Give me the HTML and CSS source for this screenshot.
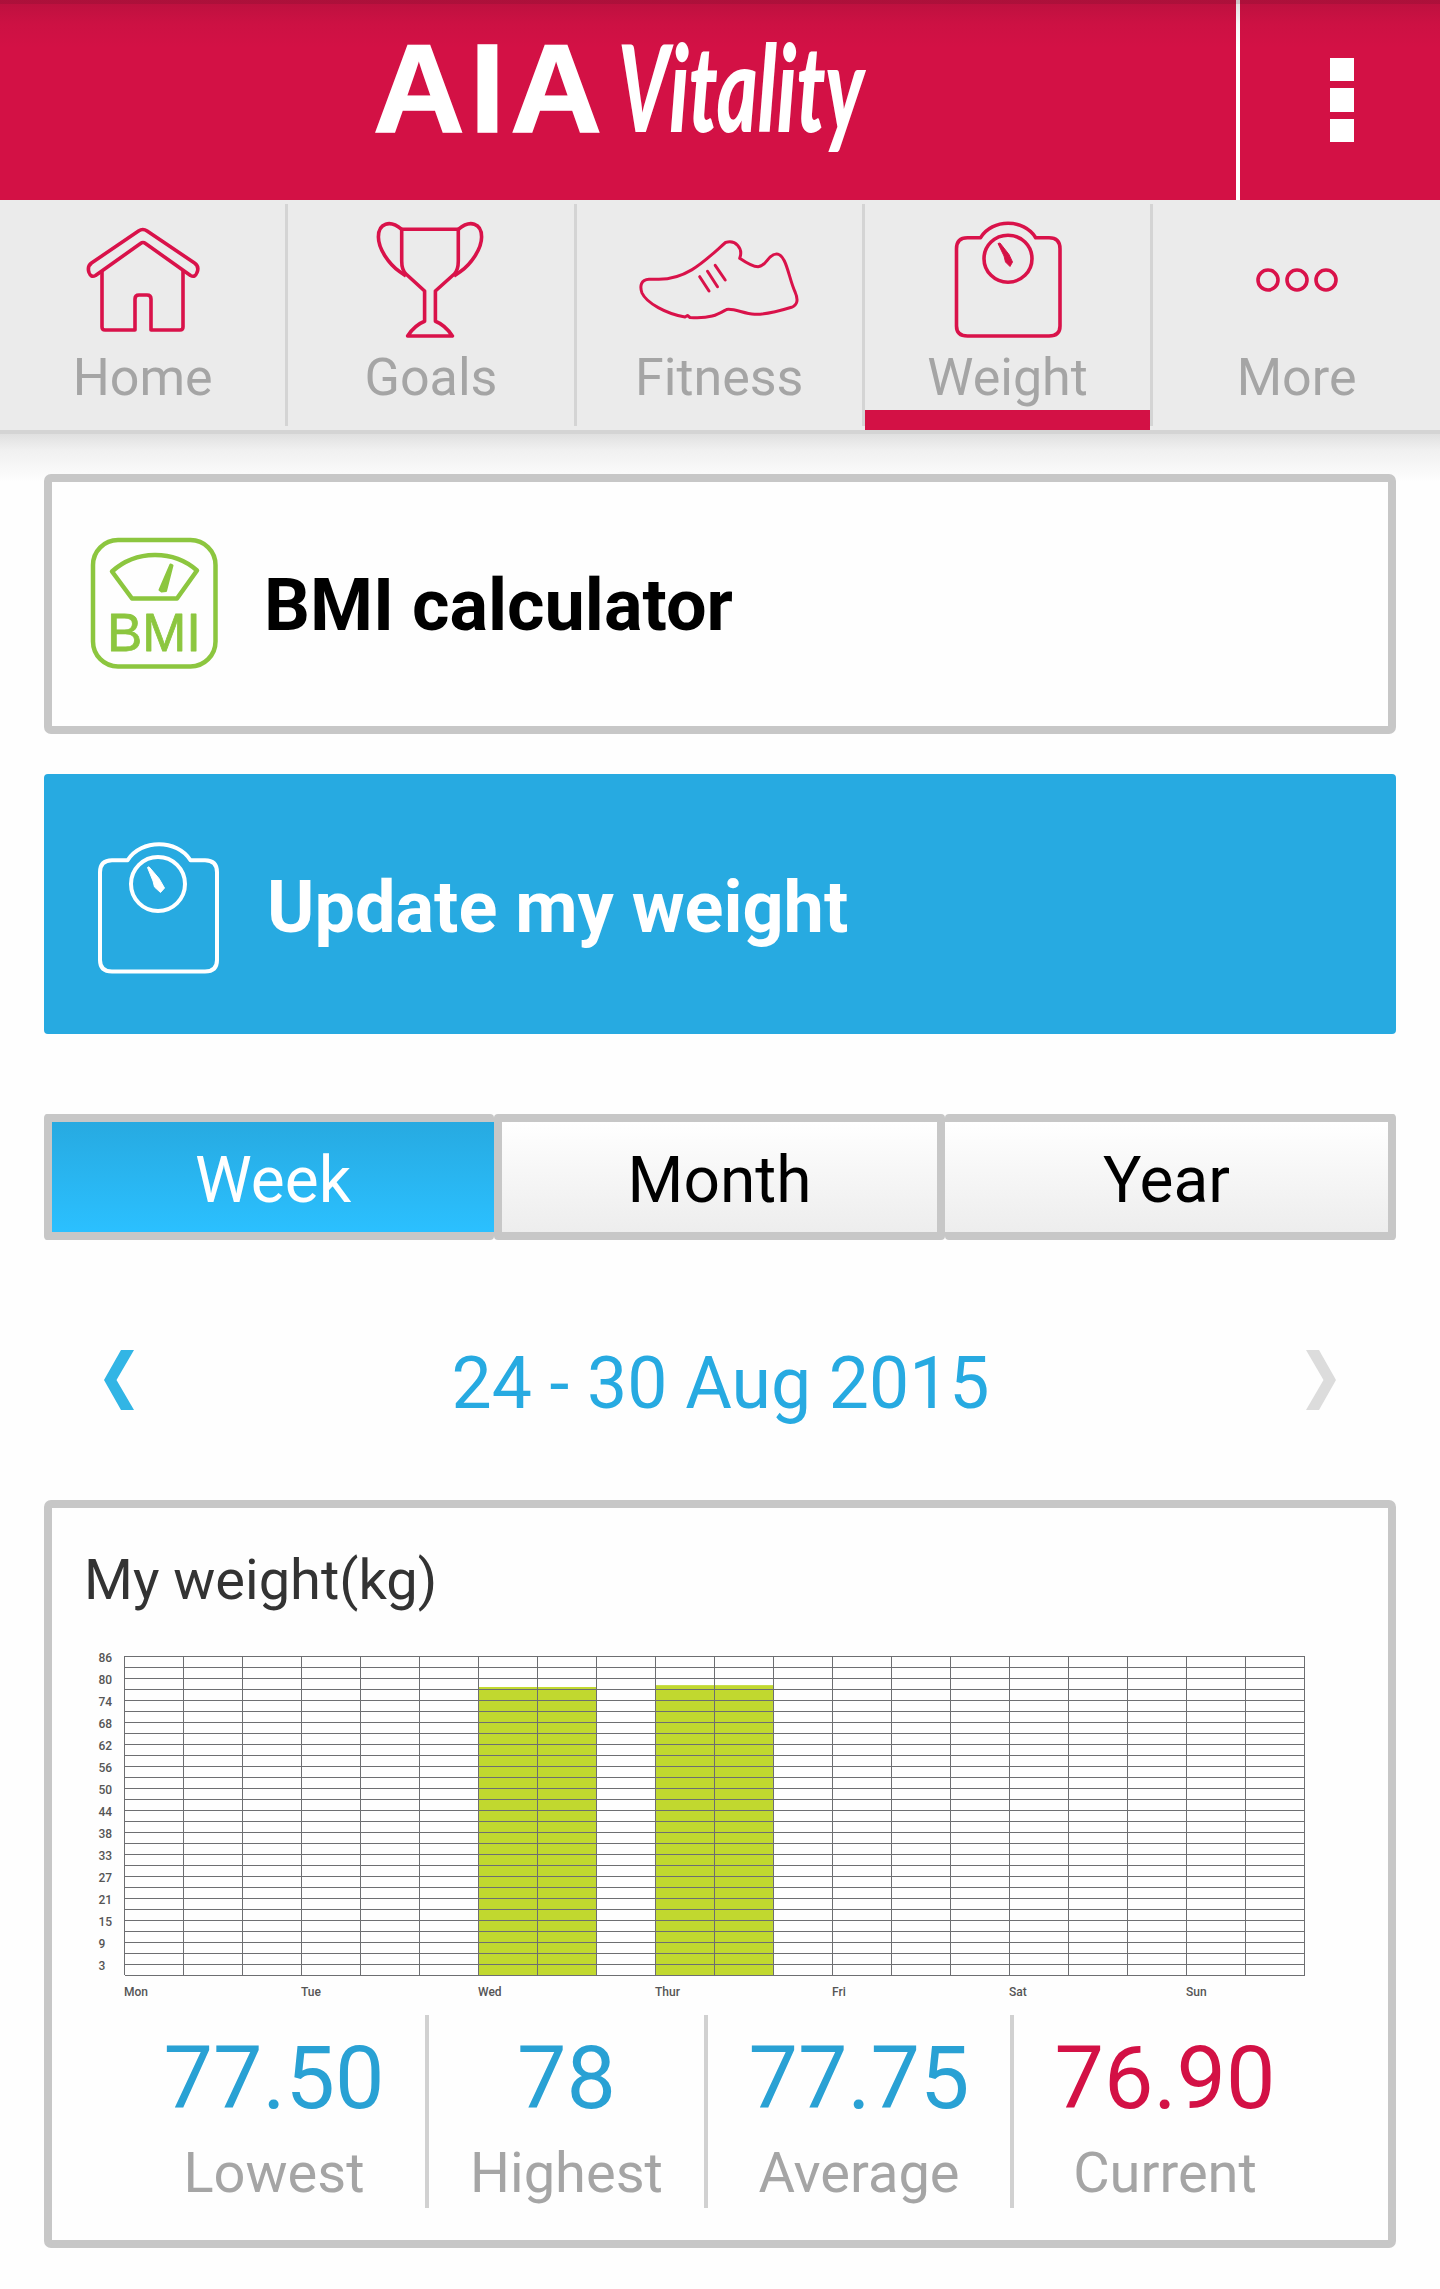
FILE: index.html
```html
<!DOCTYPE html>
<html lang="en">
<head>
  <meta charset="UTF-8">
  <meta name="viewport" content="width=device-width, initial-scale=1.0">
  <title>AIA Vitality - Weight</title>
  <link rel="stylesheet" href="styles.css">
</head>
<body>
  <header class="header">
    <div class="brand">
      <svg class="logo" viewBox="360 0 520 200" width="520" height="200">
        <text class="logo-aia" x="373" y="132" textLength="229">AIA</text>
        <text class="logo-vitality" x="618" y="132" textLength="246" lengthAdjust="spacingAndGlyphs">Vitality</text>
      </svg>
    </div>
    <div class="menu">
      <span></span>
      <span></span>
      <span></span>
    </div>
  </header>

  <nav class="nav">
    <a class="nav-item">
      <svg class="nav-icon" viewBox="52.5 220 180 120">
        <path d="M138 231q4.300 -3 8.600 0L194 263q5 3.500 2.500 9.500q-2 5.500 -6.500 3L145 243.500q-2.500 -2 -5 0L95 275.500q-4.500 2.500 -6.500 -3Q86.500 266.500 91 263z"/>
        <path d="M101.500 270v57q0 3 3 3h30V299q0 -4 4 -4h8q4 0 4 4v31h29q3 0 3 -3V270"/>
      </svg>
      <span>Home</span>
    </a>
    <a class="nav-item">
      <svg class="nav-icon" viewBox="341 220 180 120">
        <path d="M401.700 229.300h56.600V261q0 9 -4 13L435.400 291v30.300Q445 325 452.400 336H407.600Q415 325 424.600 321.300V291L406 274q-4.300 -4 -4.300 -13z"/>
        <path d="M401.700 229.300C390 219.500 378.400 223 378.400 237C378.400 249 389 264 399.500 271.500L406 276M458.300 229.300C470 219.500 481.600 223 481.600 237C481.600 249 471 264 460.500 271.500L454 276"/>
      </svg>
      <span>Goals</span>
    </a>
    <a class="nav-item">
      <svg class="nav-icon shoe" viewBox="629.500 220 180 120">
        <path d="M726 242.500C736 239.500 744 248 740.200 258.300C747 263 753 266.700 758.600 266.700C768 266 768 254 777 254C787 254 789 278 795.600 292C799 300 798 305 792 307.300C780 311 767 315 755 314.300C744 313.500 734 308 727 309.500C719 314 712 319 690.500 317.500L688 315.500L685.500 317C667 314 647 303 642.500 293C640 286 641.500 279.500 649.500 279.300H659C688 279.500 706 260 726 242.500z"/>
        <path d="M700.200 276.700L709.500 291M708 271.300L718 286.700M715.700 265.300L725.700 280"/>
      </svg>
      <span>Fitness</span>
    </a>
    <a class="nav-item active">
      <svg class="nav-icon" viewBox="918 220 180 120">
        <path d="M980.600 237.700C992 218.500 1024 218.500 1035.700 237.700H1049q11 0 11 11V326q0 10 -11 10H967.500q-11 0 -11 -10V248.700q0 -11 11 -11z"/>
        <ellipse cx="1008" cy="258.700" rx="24" ry="23.500"/>
        <path class="needle" d="M998 243.500L1000 243L1009 254.500L1012.500 262L1010 266.500L1005.500 262L1004 256z"/>
      </svg>
      <span>Weight</span>
    </a>
    <a class="nav-item">
      <svg class="nav-icon dots" viewBox="1207 220 180 120">
        <circle cx="1268" cy="280" r="10"/>
        <circle cx="1297" cy="280" r="10"/>
        <circle cx="1326" cy="280" r="10"/>
      </svg>
      <span>More</span>
    </a>
  </nav>

  <main class="content">
    <a class="card bmi">
      <svg class="card-icon" viewBox="90 536 128 136">
        <rect x="93" y="540" width="122.500" height="126.500" rx="25"/>
        <path d="M112 571.500C136 550 173 549.500 197 570.500L177 598.500H132z"/>
        <path class="needle" d="M170.500 564.500L172.500 565.500L166 591L161.500 591.500L159.500 590z"/>
        <text x="107" y="651" textLength="94" lengthAdjust="spacingAndGlyphs">BMI</text>
      </svg>
      <span>BMI calculator</span>
    </a>

    <a class="card update">
      <svg class="card-icon" viewBox="94 840 128 136">
        <path d="M127.600 860.300C141 839 177 839 190.500 860.300H205q12 0 12 12V960q0 11.500 -12 11.500H112q-12 0 -12 -11.500V872.300q0 -12 12 -12z"/>
        <circle cx="158" cy="884" r="27"/>
        <path class="needle" d="M147.500 867.500L149 866.800L159 878.500L164.500 888L160.500 892.500L154.500 887L153 881z"/>
      </svg>
      <span>Update my weight</span>
    </a>

    <div class="tabs">
      <button class="tab selected">Week</button>
      <button class="tab">Month</button>
      <button class="tab">Year</button>
    </div>

    <div class="date-nav">
      <svg class="prev" viewBox="0 0 30 60"><path d="M17 0H30L12.500 30L30 60H17L0 30z"/></svg>
      <span>24 - 30 Aug 2015</span>
      <svg class="next" viewBox="0 0 30 60"><path d="M13 0H0L17.500 30L0 60H13L30 30z"/></svg>
    </div>

    <section class="card weight">
      <h2>My weight(kg)</h2>
      <svg class="chart" id="chart" viewBox="0 0 1240 375"></svg>
      <div class="stats">
        <div class="stat"><b>77.50</b><span>Lowest</span></div>
        <div class="stat"><b>78</b><span>Highest</span></div>
        <div class="stat"><b>77.75</b><span>Average</span></div>
        <div class="stat current"><b>76.90</b><span>Current</span></div>
      </div>
    </section>
  </main>

  <script>
    const days = ['Mon', 'Tue', 'Wed', 'Thur', 'Fri', 'Sat', 'Sun'];
    const ticks = [86, 80, 74, 68, 62, 56, 50, 44, 38, 33, 27, 21, 15, 9, 3];
    const bars = [{ day: 2, value: 77.5 }, { day: 3, value: 78 }];

    // plot area inside the svg
    const left = 36.5, top0 = 26.3, colWidth = 59, rowHeight = 11;
    const right = left + colWidth * 20;
    const bottom = top0 + rowHeight * 29;

    let out = '';
    bars.forEach(bar => {
      const h = bar.value * 3.72;
      const x = left + bar.day * colWidth * 3;
      out += `<rect class="bar" x="${x}" y="${bottom - h}" width="${colWidth * 2}" height="${h}"/>`;
    });

    let grid = '';
    for (let i = 0; i <= 29; i++) {
      grid += `M${left} ${Math.floor(top0 + i * rowHeight) + 0.5}H${right}`;
    }
    for (let i = 0; i <= 20; i++) {
      grid += `M${left + i * colWidth} ${top0}V${bottom}`;
    }
    out += `<path class="grid" d="${grid}"/>`;

    ticks.forEach((t, i) => {
      out += `<text x="10.500" y="${32 + i * rowHeight * 2}">${t}</text>`;
    });
    days.forEach((d, i) => {
      out += `<text x="${left - 0.5 + i * colWidth * 3}" y="365.500">${d}</text>`;
    });
    document.getElementById('chart').innerHTML = out;
  </script>
</body>
</html>
```
FILE: styles.css
```css
* {
  box-sizing: border-box;
}
body {
  margin: 0;
  background-color: #fefefe;
  font-family: Roboto, sans-serif;
}
svg {
  display: block;
  fill: none;
}
.header {
  position: relative;
  display: flex;
  height: 200px;
  background-color: #d31145;
}
/* shade under the status bar */
.header::after {
  content: "";
  position: absolute;
  top: 0;
  left: 0;
  right: 0;
  height: 48px;
  background: linear-gradient(rgba(50, 15, 25, 0.24) 4px, rgba(50, 15, 25, 0.13) 4px, rgba(50, 15, 25, 0.04) 24px, rgba(50, 15, 25, 0));
}
.brand {
  width: 1240px;
  display: flex;
  justify-content: center;
  border-right: 4px solid #fff;
}
.logo {
  margin-left: 4px;
  overflow: visible;
}
.logo text {
  fill: #fff;
}
.logo-aia {
  font-family: "Liberation Sans", sans-serif;
  font-size: 127px;
  font-weight: bold;
  stroke: #fff;
  stroke-width: 1.5;
}
.logo-vitality {
  font-family: Lato, sans-serif;
  font-size: 120px;
  font-style: italic;
  font-weight: 900;
}
.menu {
  flex: 1;
  display: flex;
  flex-direction: column;
  align-items: center;
  justify-content: center;
  gap: 7px;
  padding-left: 4px;
}
.menu span {
  width: 24px;
  height: 23.3px;
  background-color: #fff;
}
.nav {
  position: relative;
  display: flex;
  height: 234px;
  background-color: #ebebeb;
  border-bottom: 4px solid #d4d4d4;
}
.nav::after {
  content: "";
  position: absolute;
  top: 234px;
  left: 0;
  right: 0;
  height: 48px;
  background: linear-gradient(#e0e0e0, #f0f0f0 33%, #fefefe);
}
.nav-item {
  position: relative;
  width: 288.3px;
  height: 230px;
  padding: 20px 3px 0 0;
  display: flex;
  flex-direction: column;
  align-items: center;
  gap: 8px;
  color: #a5a5a5;
  font-size: 52px;
  line-height: 60px;
}
.nav-item:last-child {
  padding-right: 0;
  flex: 1;
}
.nav-item:not(:last-child)::before {
  content: "";
  position: absolute;
  right: 0;
  top: 4px;
  width: 3px;
  height: 222px;
  background-color: #d4d4d4;
}
.nav-item.active::after {
  content: "";
  position: absolute;
  left: 0;
  right: 3px;
  bottom: 0;
  height: 20px;
  background-color: #d31145;
}
.nav-icon {
  width: 180px;
  height: 120px;
  stroke: #d9124a;
  stroke-width: 3.6;
  stroke-linejoin: round;
}
.nav-icon.shoe {
  stroke-width: 3;
  stroke-linecap: round;
}
.nav-icon .needle {
  fill: #d31145;
  stroke-width: 1;
}
.content {
  position: relative;
  z-index: 1;
  padding: 40px 44px 0;
}
.card {
  display: flex;
  height: 260px;
  border: 8px solid #c7c7c7;
  border-radius: 7px;
  background-color: #fefefe;
}
.bmi,
.update {
  align-items: center;
  font-size: 72px;
  font-weight: bold;
}
.bmi {
  padding-left: 38px;
  color: #000;
}
.bmi span {
  margin: 2px 0 0 46px;
}
.card-icon {
  width: 128px;
  height: 136px;
  stroke-width: 4.5;
  stroke-linejoin: round;
}
.bmi .card-icon {
  stroke: #8cc63f;
}
.bmi .card-icon text {
  fill: #8cc63f;
  stroke-width: 0.8;
  font-family: "Liberation Sans", sans-serif;
  font-size: 54px;
  font-weight: normal;
}
.bmi .needle {
  fill: #8cc63f;
  stroke-width: 2;
}
.update {
  margin-top: 40px;
  padding: 8px 0 0 42px;
  border-color: #27aae1;
  border-radius: 4px;
  background-color: #27aae1;
  color: #fff;
}
.update span {
  margin: -2px 0 0 45px;
}
.update .card-icon {
  stroke: #fff;
  stroke-width: 4;
}
.update .needle {
  fill: #fff;
  stroke-width: 1;
}
.tabs {
  display: grid;
  grid-template-columns: 450px 451px 451px;
  height: 126px;
  margin-top: 80px;
}
.tab {
  padding: 6px 0 0;
  border: 8px solid #c7c7c7;
  border-radius: 4px;
  background: linear-gradient(#fff, #ededed) padding-box;
  color: #000;
  font-family: inherit;
  font-size: 64px;
}
.tab.selected {
  border-right: 0;
  background: linear-gradient(#27aae1, #2bc0ff) padding-box;
  color: #fff;
}
.tab:last-child {
  border-left: 0;
}
.date-nav {
  display: flex;
  align-items: center;
  justify-content: space-between;
  height: 60px;
  margin-top: 110px;
  padding: 0 60px;
  color: #27aae1;
  font-size: 71.5px;
}
.date-nav span {
  padding: 7px 0 0 1px;
}
.date-nav svg {
  width: 30px;
  height: 60px;
}
.prev {
  fill: #32b5e5;
}
.next {
  fill: #dcdcdc;
}
.weight {
  flex-direction: column;
  height: 748px;
  margin-top: 90px;
}
.weight h2 {
  margin: 39px 0 0 32px;
  color: #333;
  font-size: 56px;
  font-weight: normal;
  line-height: 66px;
}
.chart {
  width: 1240px;
  height: 375px;
  margin: 17px 0 0 36px;
  flex-shrink: 0;
}
.grid {
  stroke: #6d6e71;
  stroke-width: 1;
  shape-rendering: crispEdges;
}
.bar {
  fill: #c1d82f;
}
.chart text {
  fill: #555;
  font-size: 12px;
  font-weight: 500;
}
.stats {
  display: grid;
  grid-template-columns: 306px 279px 306px 302px;
  height: 193px;
  margin: 10px 0 0 71px;
}
.stat {
  display: flex;
  flex-direction: column;
  align-items: center;
  gap: 12px;
  padding-top: 13px;
  border-right: 4px solid #d1d1d1;
}
.stat:last-child {
  border-right: 0;
}
.stat b {
  color: #29a1d4;
  font-size: 88px;
  font-weight: normal;
  line-height: 100px;
}
.stat.current b {
  color: #d31145;
}
.stat span {
  color: #a5a5a5;
  font-size: 56px;
  line-height: 66px;
}
```
